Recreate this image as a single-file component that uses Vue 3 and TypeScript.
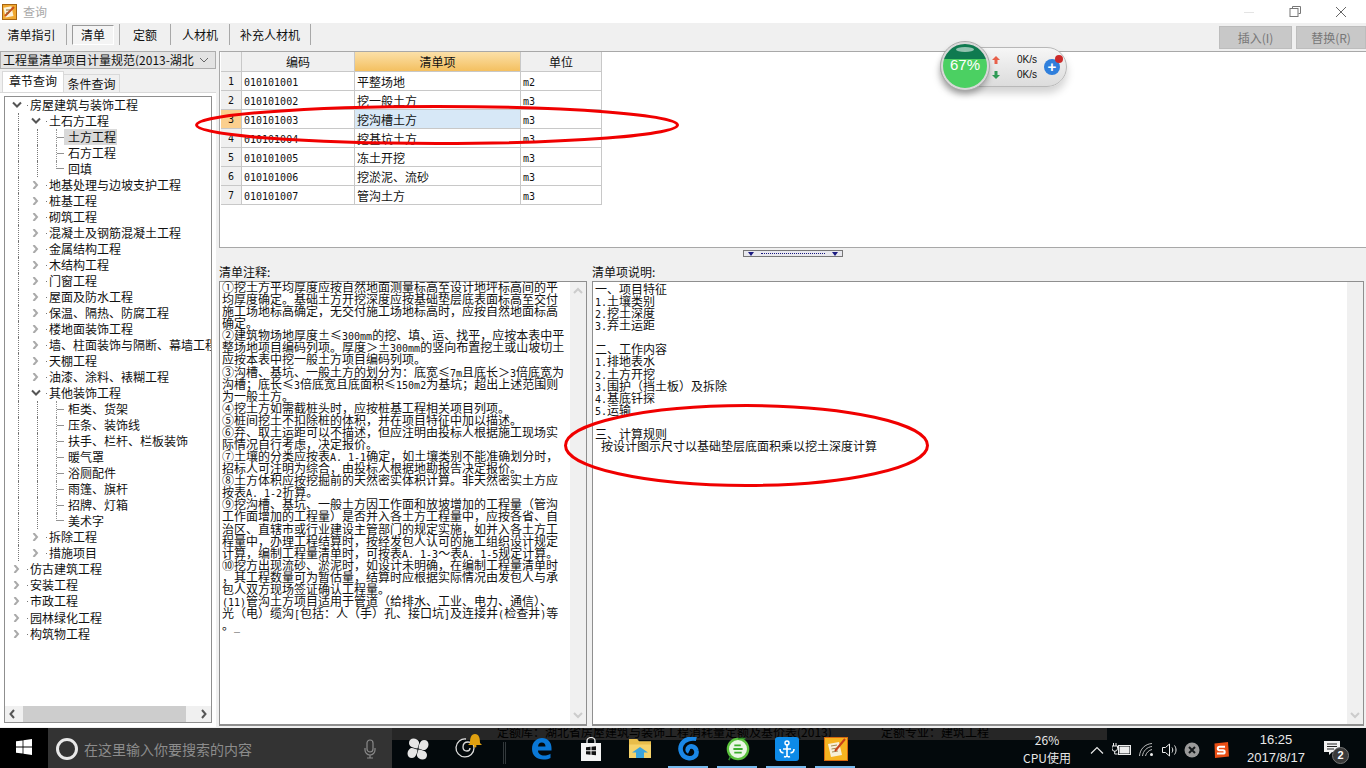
<template>
  <div class="app">
    <div class="titlebar">
      <svg class="app-icon" width="15" height="16" viewBox="0 0 15 16">
        <rect x="0.5" y="0.5" width="14" height="15" fill="#f0a830" stroke="#a8650f" />
        <rect x="2.5" y="3" width="8" height="10" fill="#fbf3dc" transform="rotate(-12 6 8)" />
        <path d="M3 12L12 3" stroke="#c8501a" stroke-width="2" />
        <path d="M4 6h4M4 9h3" stroke="#8a6a30" />
      </svg>
      <span class="title">查询</span>
      <div class="win-btns">
        <svg width="12" height="12" viewBox="0 0 12 12"><path d="M1 6.5h10" stroke="#e4e4e4" /></svg>
        <svg width="12" height="12" viewBox="0 0 12 12" fill="none" stroke="#777">
          <path d="M3.5 2.5V.5h8v7h-2" /><rect x="1" y="2.5" width="8" height="8" />
        </svg>
        <svg width="12" height="12" viewBox="0 0 12 12" stroke="#666"><path d="M1 1l10 10M11 1L1 11" /></svg>
      </div>
    </div>

    <div class="toolbar">
      <div class="tool-tabs">
        <span
          v-for="tab in toolTabs"
          :key="tab.label"
          class="tool-tab"
          :class="{ active: tab.label === '清单' }"
          :style="{ width: tab.width + 'px' }"
        >
          <span class="tool-label">{{ tab.label }}</span>
        </span>
      </div>
      <div class="actions">
        <button class="action">插入(I)</button>
        <button class="action wide">替换(R)</button>
      </div>
    </div>

    <div class="main">
      <div class="left">
        <div class="combo">
          <span class="combo-text">工程量清单项目计量规范(2013-湖北</span>
          <svg width="10" height="6" viewBox="0 0 10 6" fill="none" stroke="#666"><path d="M1 1l4 4 4-4" /></svg>
        </div>
        <div class="left-tabs">
          <span class="left-tab on">章节查询</span>
          <span class="left-tab">条件查询</span>
        </div>
        <div class="tab-body">
          <div class="tree-box">
            <div class="tree">
              <div v-for="node in tree" :key="node.t" class="tree-row">
                <i v-if="node.level > 0" class="guide"></i>
                <i v-if="node.level === 2" class="guide"></i>
                <span v-if="node.state === 'leaf'" class="leaf" :class="{ last: node.last }"></span>
                <span v-else class="tw">
                  <svg width="10" height="8" viewBox="0 0 10 8" fill="none" stroke-width="2">
                    <path v-if="node.state === 'open'" d="M1 1.5l4 4 4-4" stroke="#555" />
                    <path v-else d="M2.5 0l3.5 4-3.5 4" stroke="#aaa" />
                  </svg>
                </span>
                <span class="tree-text" :class="{ sel: node.t === '土方工程' }">{{ node.t }}</span>
              </div>
            </div>
            <div class="hscroll">
              <svg width="16" height="16" viewBox="0 0 16 16" fill="none" stroke="#555" stroke-width="2"><path d="M9 4L5.5 8 9 12" /></svg>
              <div class="hthumb"></div>
              <svg width="16" height="16" viewBox="0 0 16 16" fill="none" stroke="#555" stroke-width="2"><path d="M7 4l3.5 4L7 12" /></svg>
            </div>
          </div>
        </div>
      </div>

      <div class="right">
        <div class="grid-panel">
          <div class="grid">
            <div class="hd"></div>
            <div class="hd">编码</div>
            <div class="hd cur">清单项</div>
            <div class="hd">单位</div>
            <template v-for="(row, i) in rows" :key="row.code">
              <div class="num" :class="{ cur: i === 2 }">{{ i + 1 }}</div>
              <div class="cell mono">{{ row.code }}</div>
              <div class="cell" :class="{ picked: i === 2 }">{{ row.name }}</div>
              <div class="cell mono">{{ row.unit }}</div>
            </template>
          </div>
        </div>

        <div class="splitter">
          <div class="handle">
            <i class="tri"></i><i class="dots"></i><i class="tri"></i>
          </div>
        </div>

        <div class="notes">
          <div class="note-col first">
            <div class="note-label">清单注释:</div>
            <div class="note-box">
              <div class="note-text">
                <div v-for="(line, i) in noteLines" :key="i" class="line">
                  <span v-for="(run, j) in runs(line)" :key="j" :class="{ half: run.latin }">{{ run.text }}</span>
                </div>
              </div>
              <div class="vscroll">
                <svg width="10" height="7" viewBox="0 0 10 7" fill="none" stroke="#ccc" stroke-width="2"><path d="M1 6l4-4 4 4" /></svg>
                <svg width="10" height="7" viewBox="0 0 10 7" fill="none" stroke="#ccc" stroke-width="2"><path d="M1 1l4 4 4-4" /></svg>
              </div>
            </div>
          </div>
          <div class="note-col second-col">
            <div class="note-label">清单项说明:</div>
            <div class="note-box">
              <div class="note-text lower">
                <div v-for="(line, i) in descLines" :key="i" class="line">
                  <span v-for="(run, j) in runs(line)" :key="j" :class="{ half: run.latin }">{{ run.text }}</span>
                </div>
              </div>
              <div class="vscroll">
                <span></span>
                <svg width="10" height="7" viewBox="0 0 10 7" fill="none" stroke="#ccc" stroke-width="2"><path d="M1 1l4 4 4-4" /></svg>
              </div>
            </div>
          </div>
        </div>
      </div>
    </div>

    <div class="taskbar">
      <div class="start">
        <svg width="16" height="16" viewBox="0 0 16 16" fill="#fff">
          <path d="M0 2.3l6.6-.9v6.2H0zM7.4 1.3L16 0v7.6H7.4zM0 8.4h6.6v6.2L0 13.7zM7.4 8.4H16V16l-8.6-1.3z" />
        </svg>
      </div>
      <div class="search">
        <svg width="24" height="24" viewBox="0 0 24 24" fill="none" stroke="#e8e8e8" stroke-width="3"><circle cx="12" cy="12" r="9.5" /></svg>
        <span class="search-text">在这里输入你要搜索的内容</span>
        <svg class="mic" width="12" height="20" viewBox="0 0 12 20" fill="none" stroke="#8a8a8a" stroke-width="1.2">
          <rect x="3" y="1" width="6" height="12" rx="3" /><path d="M1 9v2a5 5 0 0 0 10 0V9M6 16v3M3 19h6" />
        </svg>
      </div>

      <div class="task-icons">
        <span class="task">
          <svg width="22" height="22" viewBox="0 0 22 22" fill="#e6e6e6">
            <path d="M10.5 10.5C5 10 2 8 2 5s2-4.500 4.500-4.500S11 2 12 4c.5 2-1 4.500-1.500 6.500z" />
            <path d="M11.500 10.500C12 5 14 2 17 2s4.500 2 4.500 4.500S20 11 18 12c-2 .5-4.500-1-6.500-1.500z" />
            <path d="M11.500 11.500C17 12 20 14 20 17s-2 4.500-4.500 4.500S11 20 10 18c-.5-2 1-4.500 1.500-6.500z" />
            <path d="M10.500 11.500C10 17 8 20 5 20S.5 18 .5 15.500 2 11 4 10c2-.5 4.500 1 6.500 1.500z" />
          </svg>
        </span>
        <span class="task swirl">
          <svg width="30" height="26" viewBox="0 0 30 26" fill="none">
            <path d="M12 7a9 9 0 1 0 8 9c0-4-3-6-6-6s-5 2-5 5 2 4 4 4 3-1 3-3" stroke="#ddd" stroke-width="1.300" />
            <path d="M16 11c0-5 1-9 5-9s5 4 5 9l2 2H14z" fill="#e0a010" /><circle cx="21" cy="14" r="1.500" fill="#e0a010" />
          </svg>
        </span>
        <span class="task-divider"><i></i></span>
        <span class="task">
          <svg width="21" height="23" viewBox="0 0 21 23" fill="#0a78d7">
            <path d="M1 12C1 5 5.500 1 11 1c6 0 9.500 4.500 9.500 10v2.500H7c0 3.500 3 5 6 5 2.500 0 5-.7 6.500-1.800v4.300C17.500 22 15.500 22.500 12.500 22.500 6 22.500 1 18.500 1 12zm6-2.500h7.500C14.500 7 13 5.500 10.800 5.500S7.300 7 7 9.500z" />
          </svg>
        </span>
        <span class="task">
          <svg width="20" height="24" viewBox="0 0 20 28" preserveAspectRatio="none">
            <path d="M6 7V4.500a4 4 0 0 1 8 0V7" fill="none" stroke="#eee" stroke-width="1.300" />
            <path d="M0 7h20v21H0z" fill="#f4f4f4" />
            <path d="M5 12l4.500-.6v4.100H5zM10.500 11.300l4.500-.6v4.800h-4.500zM5 16.500h4.500v4.100L5 20zM10.500 16.500H15v4.800l-4.500-.6z" fill="#111" />
          </svg>
        </span>
        <span class="task">
          <svg width="22" height="19" viewBox="0 0 22 24" preserveAspectRatio="none">
            <path d="M0 0h8l2 3h12v21H0z" fill="#f6d36a" />
            <path d="M0 0h8l2 3h12v4H0z" fill="#e8bd4a" />
            <path d="M7 24v-7H3l8-7 8 7h-4v7z" fill="#3ba4dc" />
          </svg>
        </span>
        <span class="task">
          <svg width="24" height="24" viewBox="0 0 24 26" fill="none">
            <path d="M20 2c-5-1-13 0-16 6-3 6 0 14 8 15 5 .5 9-3 8-8-.7-4-5-6-8-4-2 1.500-2 4 0 5" stroke="#1a87e6" stroke-width="5" />
          </svg>
        </span>
        <span class="task">
          <svg width="24" height="24" viewBox="0 0 26 26">
            <circle cx="13" cy="13" r="11" fill="#eaf7e4" stroke="#5ac13c" stroke-width="2.500" />
            <path d="M8 13h10M9 9h7M9 17h8" stroke="#3cae2d" stroke-width="2" />
            <path d="M13 2c3-1 6-1 8 0M5 21l-2 4" stroke="#2f8f2a" stroke-width="1.500" fill="none" />
          </svg>
        </span>
        <span class="task">
          <svg width="24" height="24" viewBox="0 0 24 24">
            <rect width="24" height="24" rx="3" fill="#0d8ae8" />
            <path d="M12 7v12M5 12c0 3 2 4 3.500 3.500M19 12c0 3-2 4-3.500 3.500M8 12h8M12 19c-1 1-2 1-3 .5M12 19c1 1 2 1 3 .5" stroke="#fff" stroke-width="1.600" fill="none" />
            <circle cx="12" cy="6" r="2" fill="none" stroke="#fff" stroke-width="1.400" />
          </svg>
        </span>
        <span class="task">
          <svg width="24" height="24" viewBox="0 0 24 24">
            <rect x="0.500" y="0.500" width="23" height="23" fill="#f6b320" stroke="#d5680f" />
            <path d="M4 7l11-2 3 13-11 2z" fill="#f7efd8" />
            <path d="M7 9l6-1M7.500 12l6-1M8 15l6-1" stroke="#a58a55" />
            <path d="M11 14L21 2" stroke="#c8401a" stroke-width="2" />
          </svg>
        </span>
      </div>

      <div class="tray">
        <div class="cpu"><span>26%</span><span>CPU使用</span></div>
        <span class="tray-cell w24">
          <svg width="14" height="8" viewBox="0 0 14 8" fill="none" stroke="#e8e8e8" stroke-width="1.200"><path d="M1 7.500l6-6 6 6" /></svg>
        </span>
        <span class="tray-cell w26">
          <svg width="20" height="13" viewBox="0 0 20 13" fill="none" stroke="#eee">
            <path d="M4 0v3M1.500 0v3M0 3h5.500v2.500a2.700 2.700 0 0 1-5.500 0zM2.700 8v3h3" />
            <rect x="6.500" y="2.500" width="12" height="9" /><rect x="8" y="4" width="9" height="6" fill="#eee" />
          </svg>
        </span>
        <span class="tray-cell w24">
          <svg width="16" height="14" viewBox="0 0 16 14" fill="none" stroke="#bbb">
            <path d="M.5 13C1 6 6 1 13 .5M3.500 13C4 8 8 4 13 3.500M6.500 13C7 10 10 7 13 6.500" />
            <circle cx="12.500" cy="11.500" r="1.500" fill="#eee" stroke="none" />
          </svg>
        </span>
        <span class="tray-cell w21">
          <svg width="16" height="14" viewBox="0 0 16 14" fill="none" stroke="#eee">
            <path d="M.5 4.500h3l4-3.500v12l-4-3.500h-3zM10 4.500c1 1.500 1 3.500 0 5M12.500 2.500c2 2.500 2 6.500 0 9" />
          </svg>
        </span>
        <span class="tray-cell w24">
          <svg width="16" height="16" viewBox="0 0 16 16">
            <circle cx="8" cy="8" r="7.500" fill="#9a9a9a" /><path d="M5 5l6 6M11 5l-6 6" stroke="#15191b" stroke-width="2" />
          </svg>
        </span>
        <span class="tray-cell w34">
          <svg width="16" height="16" viewBox="0 0 16 16">
            <path d="M1.500 1.500L15 0l1 14.500L2 16z" fill="#ea4e14" />
            <path d="M12 4.800H6.500a1.700 1.700 0 0 0 0 3.400h3.500a1.700 1.700 0 0 1 0 3.400H4" fill="none" stroke="#fff" stroke-width="2" />
          </svg>
        </span>
        <div class="clock"><span>16:25</span><span>2017/8/17</span></div>
        <span class="notify">
          <svg width="16" height="15" viewBox="0 0 16 15">
            <path d="M0 0h16v11H8l-3 3v-3H0z" fill="#f2f2f2" /><path d="M3 3h10M3 5.500h10M3 8h7" stroke="#222" />
          </svg>
          <b class="badge">2</b>
        </span>
      </div>

      <div class="status-strip">
        <span class="strip-a">定额库：湖北省房屋建筑与装饰工程消耗量定额及基价表(2013)</span>
        <span class="strip-b">定额专业：建筑工程</span>
      </div>
      <i v-for="x in [668, 717, 766, 815]" :key="x" class="run-mark" :style="{ left: x + 'px' }"></i>
    </div>

    <!-- net speed widget floating over the grid -->
    <div class="speed">
      <div class="ball"><i class="gloss"></i><span>67%</span></div>
      <div class="arrows">
        <svg width="8" height="8" viewBox="0 0 8 8" fill="#e8604a"><path d="M4 0l4 4H5.500v4h-3V4H0z" /></svg>
        <svg width="8" height="8" viewBox="0 0 8 8" fill="#2f9a55"><path d="M4 8l4-4H5.500V0h-3v4H0z" /></svg>
      </div>
      <div class="rates"><span>0K/s</span><span>0K/s</span></div>
      <div class="plus">+<i></i></div>
    </div>

    <!-- hand drawn red marks on the screenshot -->
    <svg class="marks" width="1366" height="768" viewBox="0 0 1366 768" fill="none" stroke="#f00000" stroke-width="3">
      <ellipse cx="437" cy="125" rx="240.500" ry="18.500" />
      <ellipse cx="746.500" cy="445.500" rx="181" ry="40" />
    </svg>
  </div>
</template>

<script setup lang="ts">
type Node = { t: string; level: number; state: "open" | "closed" | "leaf"; last?: boolean };

const toolTabs = [
  { label: "清单指引", width: 67 },
  { label: "清单", width: 53 },
  { label: "定额", width: 51 },
  { label: "人材机", width: 59 },
  { label: "补充人材机", width: 81 },
];

const rows = [
  { code: "010101001", name: "平整场地", unit: "m2" },
  { code: "010101002", name: "挖一般土方", unit: "m3" },
  { code: "010101003", name: "挖沟槽土方", unit: "m3" },
  { code: "010101004", name: "挖基坑土方", unit: "m3" },
  { code: "010101005", name: "冻土开挖", unit: "m3" },
  { code: "010101006", name: "挖淤泥、流砂", unit: "m3" },
  { code: "010101007", name: "管沟土方", unit: "m3" },
];

const branch = (names: string[]): Node[] => names.map((t) => ({ t, level: 1, state: "closed" }));
const leaves = (names: string[]): Node[] =>
  names.map((t, i) => ({ t, level: 2, state: "leaf", last: i === names.length - 1 }));

const tree: Node[] = [
  { t: "房屋建筑与装饰工程", level: 0, state: "open" },
  { t: "土石方工程", level: 1, state: "open" },
  ...leaves(["土方工程", "石方工程", "回填"]),
  ...branch([
    "地基处理与边坡支护工程",
    "桩基工程",
    "砌筑工程",
    "混凝土及钢筋混凝土工程",
    "金属结构工程",
    "木结构工程",
    "门窗工程",
    "屋面及防水工程",
    "保温、隔热、防腐工程",
    "楼地面装饰工程",
    "墙、柱面装饰与隔断、幕墙工程",
    "天棚工程",
    "油漆、涂料、裱糊工程",
  ]),
  { t: "其他装饰工程", level: 1, state: "open" },
  ...leaves(["柜类、货架", "压条、装饰线", "扶手、栏杆、栏板装饰", "暖气罩", "浴厕配件", "雨篷、旗杆", "招牌、灯箱", "美术字"]),
  ...branch(["拆除工程", "措施项目"]),
  { t: "仿古建筑工程", level: 0, state: "closed" },
  { t: "安装工程", level: 0, state: "closed" },
  { t: "市政工程", level: 0, state: "closed" },
  { t: "园林绿化工程", level: 0, state: "closed" },
  { t: "构筑物工程", level: 0, state: "closed" },
];

const noteLines = [
  "①挖土方平均厚度应按自然地面测量标高至设计地坪标高间的平",
  "均厚度确定。基础土方开挖深度应按基础垫层底表面标高至交付",
  "施工场地标高确定，无交付施工场地标高时，应按自然地面标高",
  "确定。",
  "②建筑物场地厚度±≤300mm的挖、填、运、找平，应按本表中平",
  "整场地项目编码列项。厚度＞±300mm的竖向布置挖土或山坡切土",
  "应按本表中挖一般土方项目编码列项。",
  "③沟槽、基坑、一般土方的划分为：底宽≤7m且底长＞3倍底宽为",
  "沟槽；底长≤3倍底宽且底面积≤150m2为基坑；超出上述范围则",
  "为一般土方。",
  "④挖土方如需截桩头时，应按桩基工程相关项目列项。",
  "⑤桩间挖土不扣除桩的体积，并在项目特征中加以描述。",
  "⑥弃、取土运距可以不描述，但应注明由投标人根据施工现场实",
  "际情况自行考虑，决定报价。",
  "⑦土壤的分类应按表A. 1-1确定，如土壤类别不能准确划分时，",
  "招标人可注明为综合，由投标人根据地勘报告决定报价。",
  "⑧土方体积应按挖掘前的天然密实体积计算。非天然密实土方应",
  "按表A. 1-2折算。",
  "⑨挖沟槽、基坑、一般土方因工作面和放坡增加的工程量（管沟",
  "工作面增加的工程量）是否并入各土方工程量中，应按各省、自",
  "治区、直辖市或行业建设主管部门的规定实施，如并入各土方工",
  "程量中，办理工程结算时，按经发包人认可的施工组织设计规定",
  "计算，编制工程量清单时，可按表A. 1-3～表A. 1-5规定计算。",
  "⑩挖方出现流砂、淤泥时，如设计未明确，在编制工程量清单时",
  "，其工程数量可为暂估量，结算时应根据实际情况由发包人与承",
  "包人双方现场签证确认工程量。",
  "(11)管沟土方项目适用于管道（给排水、工业、电力、通信）、",
  "光（电）缆沟[包括：人（手）孔、接口坑]及连接井(检查井)等",
  "。_",
];

const descLines = [
  "一、项目特征",
  "1.土壤类别",
  "2.挖土深度",
  "3.弃土运距",
  " ",
  "二、工作内容",
  "1.排地表水",
  "2.土方开挖",
  "3.围护（挡土板）及拆除",
  "4.基底钎探",
  "5.运输",
  " ",
  "三、计算规则",
  " 按设计图示尺寸以基础垫层底面积乘以挖土深度计算",
];

// the old app draws ascii half width, so latin runs get their own 6px mono cell
const runs = (line: string) => {
  const parts = line.match(/[ -~]+|[^ -~]+/g) ?? [];
  return parts.map((text) => ({ text, latin: /^[ -~]/.test(text) }));
};
</script>

<style scoped>
.app {
  position: relative;
  width: 1366px;
  height: 768px;
  display: flex;
  flex-direction: column;
  overflow: hidden;
  background: #f0f0f0;
  color: #111;
  font: 12px/12px "Noto Sans CJK SC", sans-serif;
}

.titlebar {
  height: 23px;
  flex: none;
  display: flex;
  align-items: center;
  background: #fff;
  padding-left: 2px;
}
.app-icon {
  margin-right: 6px;
}
.title {
  color: #a8a8a8;
}
.win-btns {
  margin-left: auto;
  display: flex;
  gap: 34px;
  padding-right: 19px;
}

.toolbar {
  height: 28px;
  flex: none;
  display: flex;
  justify-content: space-between;
  background: #f0f0f0;
}
.tool-tabs {
  display: flex;
  height: 21px;
  margin-top: 1px;
}
.tool-tab {
  display: flex;
  align-items: center;
  justify-content: center;
  box-sizing: border-box;
  border-right: 1px solid #a8a8a8;
}
.tool-tab:first-child {
  padding-right: 3px;
}
.tool-tab.active .tool-label {
  display: block;
  padding: 3px 8px;
  border: 1px solid #9a9a9a;
  border-right-color: #fff;
  border-bottom-color: #fff;
  background: #f4f4f4;
}
.actions {
  display: flex;
  gap: 4px;
  padding-top: 3px;
}
.action {
  width: 73px;
  height: 23px;
  padding: 0;
  border: 1px solid #bdbdbd;
  background: #c8c8c8;
  color: #777;
  font: inherit;
}
.action.wide {
  width: 70px;
}

.main {
  flex: 1;
  min-height: 0;
  display: flex;
}
.left {
  width: 219px;
  flex: none;
  display: flex;
  flex-direction: column;
}
.combo {
  width: 216px;
  height: 18px;
  flex: none;
  box-sizing: border-box;
  display: flex;
  align-items: center;
  justify-content: space-between;
  padding: 0 6px 0 2px;
  background: #e3e3e3;
  border: 1px solid #adadad;
  white-space: nowrap;
}
.combo-text {
  overflow: hidden;
}
.left-tabs {
  display: flex;
  align-items: flex-end;
  flex: none;
  height: 20px;
  margin: 3px 0 0 2px;
}
.left-tab {
  width: 55px;
  height: 17px;
  line-height: 17px;
  text-align: center;
  background: #f0f0f0;
  border: 1px solid #d9d9d9;
  border-bottom: 0;
  border-left: 0;
}
.left-tab.on {
  width: 60px;
  height: 20px;
  line-height: 18px;
  background: #fff;
  border-left: 1px solid #d9d9d9;
}
.tab-body {
  width: 216px;
  flex: 1;
  min-height: 0;
  box-sizing: border-box;
  display: flex;
  margin-bottom: 1px;
  padding: 3px 4px 4px;
  background: #fff;
  border-top: 1px solid #d9d9d9;
}
.tree-box {
  flex: 1;
  min-width: 0;
  box-sizing: border-box;
  border: 1px solid #8f8f8f;
  display: flex;
  flex-direction: column;
  background: #fff;
}
.tree {
  flex: 1;
  min-height: 0;
  padding-left: 13px;
  overflow: hidden;
}
.tree-row {
  height: 16.03px;
  display: flex;
  align-items: center;
  white-space: nowrap;
}
.guide {
  width: 19px;
  height: 100%;
  flex: none;
  box-sizing: border-box;
  border-left: 1px dotted #777;
}
.tw {
  width: 12px;
  flex: none;
  display: flex;
  position: relative;
  height: 100%;
  align-items: center;
}
.tw svg {
  margin-left: -6px;
}
.tw::after {
  content: "";
  position: absolute;
  right: 2px;
  top: 8px;
  width: 1px;
  height: 1px;
  background: #777;
}
.leaf {
  width: 12px;
  height: 100%;
  flex: none;
  box-sizing: border-box;
  border-left: 1px dotted #777;
  background: linear-gradient(#777, #777) 0 50% / 7px 1px no-repeat;
  opacity: 0.8;
}
.leaf.last {
  height: 50%;
  align-self: flex-start;
  background-position: 0 100%;
}
.tree-text {
  padding: 2px 0;
  line-height: 12px;
}
.tree-text.sel {
  background: #d9d9d9;
  margin-left: -4px;
  padding: 2px 1px 2px 4px;
}
.hscroll {
  height: 16px;
  flex: none;
  display: flex;
  background: #f0f0f0;
}
.hscroll svg {
  flex: none;
}
.hthumb {
  width: 163px;
  margin-left: 2px;
  background: #cdcdcd;
  margin-right: auto;
}

.right {
  flex: 1;
  min-width: 0;
  display: flex;
  flex-direction: column;
}
.grid-panel {
  height: 197px;
  flex: none;
  box-sizing: border-box;
  padding: 0 0 0 1px;
  background: #fff;
  border: 1px solid #a8a8a8;
  border-right: 0;
}
.grid {
  display: grid;
  grid-template-columns: 21px 113px 166px 81px;
  grid-template-rows: 20px repeat(7, 19px);
  width: max-content;
}
.hd,
.num,
.cell {
  display: flex;
  align-items: center;
  box-sizing: border-box;
  border-right: 1px solid #c8c8c8;
  border-bottom: 1px solid #c8c8c8;
}
.hd {
  justify-content: center;
  background: #f0f0f0;
}
.hd.cur {
  background: linear-gradient(#fbe0a8, #f4c060);
}
.num {
  justify-content: center;
  background: #f0f0f0;
  font: 10px "DejaVu Sans Mono", monospace;
}
.num.cur {
  background: #fbcf8e;
}
.cell {
  padding: 2px 0 0 2px;
}
.cell.picked {
  background: #d7e8f7;
}
.mono {
  font: 10px "DejaVu Sans Mono", monospace;
}

.splitter {
  height: 11px;
  flex: none;
  display: flex;
  justify-content: center;
  padding-top: 2px;
  box-sizing: border-box;
}
.handle {
  width: 100px;
  height: 7px;
  box-sizing: border-box;
  border: 1px solid #777;
  background: #e8e8ee;
  display: flex;
  align-items: center;
  justify-content: space-between;
  padding: 0 4px;
}
.tri {
  width: 0;
  height: 0;
  border: 3px solid transparent;
  border-top: 4px solid #1a1a80;
  border-bottom: 0;
}
.dots {
  flex: 1;
  margin: 0 7px;
  border-top: 1px dotted #1a1a80;
}

.notes {
  flex: 1;
  min-height: 0;
  display: flex;
  gap: 5px;
  padding-bottom: 2px;
}
.note-col {
  display: flex;
  flex-direction: column;
}
.note-col.first {
  width: 368px;
  flex: none;
}
.note-col.second-col {
  flex: 1;
  min-width: 0;
  padding-right: 2px;
}
.note-label {
  height: 22px;
  flex: none;
  padding-top: 7px;
  box-sizing: border-box;
}
.note-box {
  flex: 1;
  min-height: 0;
  display: flex;
  background: #fff;
  border: 1px solid #8f8f8f;
  border-bottom-width: 2px;
}
.note-text {
  flex: 1;
  min-width: 0;
  margin-top: -1px;
  padding-left: 2px;
  overflow: hidden;
}
.note-text.lower {
  margin-top: 0;
  padding-top: 1px;
}
.line {
  height: 12.08px;
  line-height: 12px;
  white-space: pre;
  font-feature-settings: "fwid";
}
.half {
  font: 10px/12px "DejaVu Sans Mono", monospace;
}
.vscroll {
  width: 16px;
  flex: none;
  display: flex;
  flex-direction: column;
  align-items: center;
  justify-content: space-between;
  padding: 5px 0;
  box-sizing: border-box;
  background: #f0f0f0;
}

.taskbar {
  position: relative;
  height: 40px;
  flex: none;
  display: flex;
  background: #03090c;
  color: #e8e8e8;
}
.start {
  width: 48px;
  flex: none;
  display: flex;
  align-items: center;
  justify-content: center;
  background: #000;
  padding-bottom: 2px;
  box-sizing: border-box;
}
.search {
  width: 344px;
  flex: none;
  display: flex;
  align-items: center;
  padding-left: 7px;
  box-sizing: border-box;
  background: #333;
  padding-top: 1px;
}
.search-text {
  margin-left: 5px;
  font-size: 14px;
  color: #8c8c8c;
  line-height: 16px;
}
.mic {
  margin-left: 112px;
}
.task-icons {
  position: relative;
  z-index: 1;
  display: flex;
  margin-left: 1px;
}
.task {
  width: 49px;
  display: flex;
  align-items: center;
  justify-content: center;
  padding-top: 1px;
  box-sizing: border-box;
}
.swirl {
  padding: 0 0 6px 4px;
}
.task-divider {
  width: 26px;
  display: flex;
  justify-content: center;
  padding: 14px 0 4px;
  box-sizing: border-box;
}
.task-divider i {
  width: 3px;
  border: solid #33393c;
  border-width: 0 1px;
  box-sizing: border-box;
}
.run-mark {
  position: absolute;
  bottom: 0;
  width: 40px;
  height: 2px;
  background: #76b9ed;
}
.tray {
  position: relative;
  z-index: 1;
  margin-left: auto;
  display: flex;
  align-items: center;
}
.cpu,
.clock {
  display: flex;
  flex-direction: column;
  align-items: center;
  gap: 5px;
  line-height: 13px;
  white-space: nowrap;
}
.cpu {
  width: 60px;
  margin-right: 8px;
}
.clock {
  width: 62px;
  margin-left: 7px;
  margin-right: -1px;
  font: 13px/13px "Liberation Sans", sans-serif;
}
.tray-cell {
  display: flex;
  justify-content: center;
  padding-top: 3px;
}
.w24 {
  width: 24px;
}
.w26 {
  width: 26px;
}
.w21 {
  width: 21px;
}
.w34 {
  width: 34px;
}
.notify {
  position: relative;
  width: 60px;
  display: flex;
  justify-content: center;
  padding-right: 8px;
  box-sizing: border-box;
}
.badge {
  position: absolute;
  left: 26px;
  top: 6px;
  width: 15px;
  height: 15px;
  border-radius: 50%;
  background: #3a3a3a;
  border: 1px solid #777;
  color: #fff;
  font: bold 11px/15px "Liberation Sans", sans-serif;
  text-align: center;
}
.status-strip {
  position: absolute;
  left: 392px;
  top: 0;
  width: 715px;
  height: 12px;
  overflow: hidden;
  background: #262626;
  color: #000;
  line-height: 12px;
  white-space: nowrap;
}
.strip-a,
.strip-b {
  position: absolute;
  top: -2px;
}
.strip-a {
  left: 105px;
}
.strip-b {
  left: 489px;
}

.speed {
  position: absolute;
  left: 940px;
  top: 47px;
  width: 127px;
  height: 40px;
  box-sizing: border-box;
  display: flex;
  align-items: center;
  border-radius: 20px;
  background: linear-gradient(#f6f6f6, #dcdcdc);
  border: 1px solid #b8b8b8;
  box-shadow: 0 6px 8px rgba(0, 0, 0, 0.18);
  color: #111;
}
.ball {
  position: relative;
  width: 44px;
  height: 44px;
  flex: none;
  margin-top: -3px;
  border-radius: 50%;
  border: 2px solid #d8d8d8;
  outline: 1px solid #aaa;
  background: linear-gradient(#0f7a50 0, #0f7a50 34%, #4bd062 34%, #4bd062 100%);
  display: flex;
  align-items: center;
  justify-content: center;
  color: #fff;
  font: 15px "Liberation Sans", sans-serif;
  box-shadow: 0 4px 6px rgba(0, 0, 0, 0.3);
}
.ball span {
  margin-top: -3px;
}
.gloss {
  position: absolute;
  left: 13px;
  top: 3px;
  width: 18px;
  height: 5px;
  border-radius: 50%;
  background: rgba(255, 255, 255, 0.55);
}
.arrows {
  display: flex;
  flex-direction: column;
  gap: 7px;
  margin-left: 3px;
}
.rates {
  width: 37px;
  display: flex;
  flex-direction: column;
  align-items: flex-end;
  gap: 3px;
  font: 10px/12px "Liberation Sans", sans-serif;
}
.plus {
  position: relative;
  width: 16px;
  height: 16px;
  margin-left: 7px;
  border-radius: 50%;
  background: #2f7fdc;
  color: #fff;
  font: bold 15px/16px "Liberation Sans", sans-serif;
  text-align: center;
}
.plus i {
  position: absolute;
  right: -3px;
  top: -4px;
  width: 8px;
  height: 8px;
  border-radius: 50%;
  background: #cc2a2a;
}
.marks {
  position: absolute;
  left: 0;
  top: 0;
  pointer-events: none;
}
</style>

<style>
body {
  margin: 0;
  background: #f0f0f0;
}
</style>
